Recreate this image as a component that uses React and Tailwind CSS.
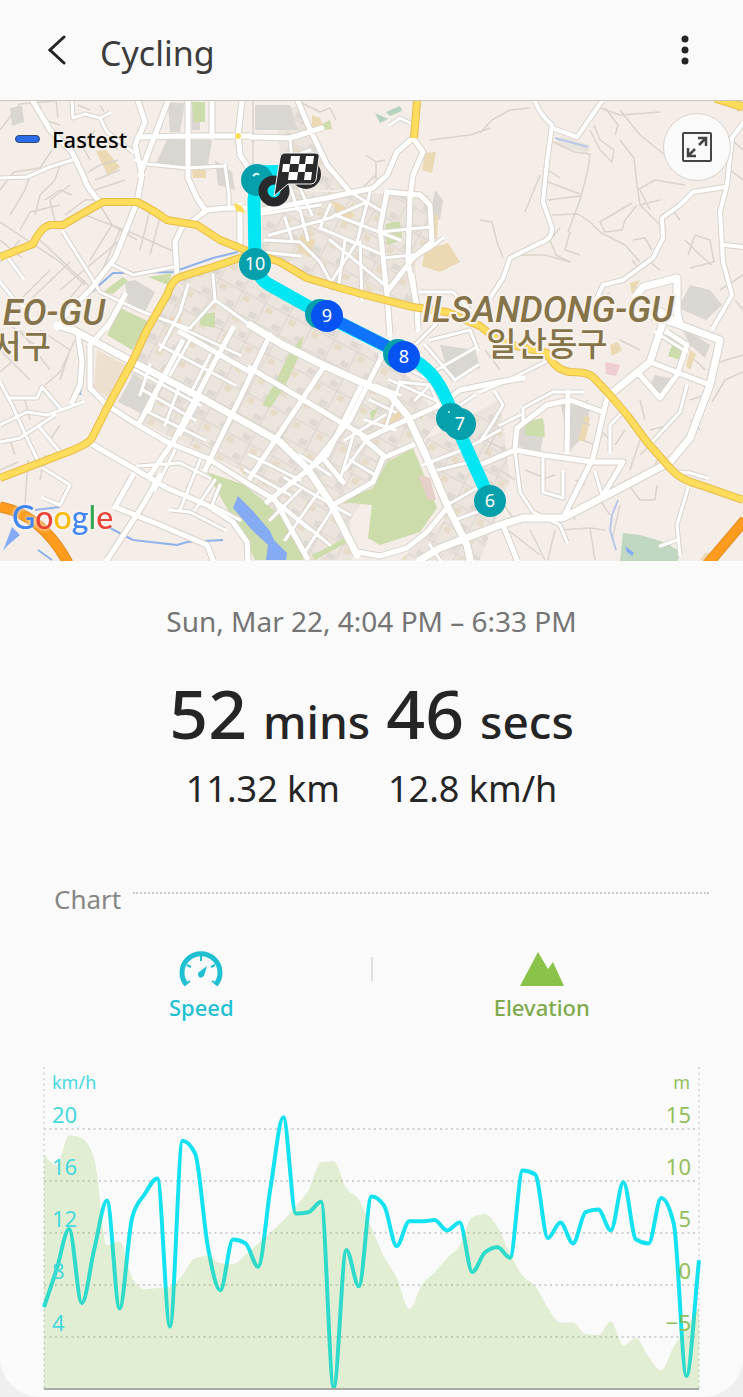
const SPEED = [
  6.3, 9.2, 12.3, 6.6, 10.8, 14.5, 6.2, 13.2, 15, 16.2, 4.8, 19.1, 18.1, 11, 7.6, 11.5, 11.2, 9.4,
  15.6, 20.9, 13.5, 13.6, 14.4, 0.1, 10.7, 7.9, 14.8, 14.1, 11, 12.9, 12.9, 13, 12.2, 12.8, 9,
  10.5, 10.9, 10.1, 16.8, 16.5, 11.6, 12.8, 11.2, 13.6, 13.8, 12.2, 15.9, 11.5, 11.2, 14.7, 12.7,
  1, 9.9,
];

const ELEVATION = [
  12.5, 11.5, 14.4, 14.1, 12.1, 3.8, 4.2, 0.7, -0.4, -0.3, -0.2, 1, 2.6, 2.8, 2.1, 2, 2.9, 4, 5.1,
  6.2, 7.6, 9.1, 11.8, 11.9, 9.3, 8.2, 5.5, 2.7, 0.7, -2.3, 0, 1.2, 2.6, 3.8, 6.5, 6.8, 5.6, 3,
  0.9, -0.1, -2.2, -3.6, -3.6, -4.7, -4.8, -3.5, -5.8, -5.1, -6.9, -8.2, -5.9, -4.2, -2.1,
];

const CHART_W = 655;
const CHART_H = 322;
const GRID = [
  { y: 62, left: "20", right: "15" },
  { y: 114, left: "16", right: "10" },
  { y: 166, left: "12", right: "5" },
  { y: 218, left: "8", right: "0" },
  { y: 270, left: "4", right: "−5" },
];

// monotone cubic, so the curve never overshoots a sample
function curve(pts) {
  const n = pts.length;
  const slope = (i) => (pts[i + 1][1] - pts[i][1]) / (pts[i + 1][0] - pts[i][0]);
  const tangents = pts.map((_, i) => {
    if (i === 0) return slope(0);
    if (i === n - 1) return slope(n - 2);
    const a = slope(i - 1);
    const b = slope(i);
    if (a * b <= 0) return 0;
    return Math.sign(a) * Math.min(Math.abs(a), Math.abs(b), Math.abs(a + b) / 4) * 2;
  });
  let d = `M${pts[0][0]} ${pts[0][1]}`;
  for (let i = 1; i < n; i++) {
    const dx = (pts[i][0] - pts[i - 1][0]) / 3;
    d += `C${pts[i - 1][0] + dx} ${pts[i - 1][1] + tangents[i - 1] * dx} ${pts[i][0] - dx} ${pts[i][1] - tangents[i] * dx} ${pts[i][0]} ${pts[i][1]}`;
  }
  return d;
}

const xAt = (i) => (i * CHART_W) / (SPEED.length - 1);
const speedPath = curve(SPEED.map((v, i) => [xAt(i), CHART_H - v * 13]));
const elevationPath =
  curve(ELEVATION.map((v, i) => [xAt(i), 62 + (15 - v) * 10.4])) + `V${CHART_H}H0Z`;

/* ---------- map data ---------- */

const LANES = [
  "M0 130L20 104L55 101M0 190L14 172L40 168L52 150M10 215L25 190L30 176M35 215L40 195L55 180L60 165M20 230L30 212L60 205M55 222L50 200L70 185M65 215L85 200L98 200M72 195L60 190L45 200M88 172L100 165L118 160M95 180L120 170M90 160L82 145L95 130M105 140L118 150M95 190L125 180M40 105L44 120L60 125M56 101L58 118M78 105L90 110M100 105L104 112",
  "M0 222L60 262L85 285M20 240L0 262M40 240L95 292M100 205L112 225L137 240M112 225L90 260M120 230L100 275M85 215L130 232L175 252M150 210L140 250M160 217L150 255M130 232L60 290M20 300L50 270M70 262L30 300M0 240L22 258M60 310L85 280",
  "M20 330L50 370M40 330L70 350L60 380M0 350L30 380M75 340L60 372L45 385M10 325L35 345M0 372L20 355M25 400L30 420M50 440L60 425M10 440L15 455M0 470L18 462M28 460L25 505M45 455L40 480",
  "M253 101V150M253 170V150M298 101L320 112L330 108L336 120M366 155L376 162L385 160M376 162V180M360 190L376 175M430 140L445 138L470 135L490 128",
  "M480 133L492 120L510 110L530 108M480 220L492 222L497 242L503 258M553 142L575 152L590 154L588 170L580 200L568 232M548 182L580 194M548 200L580 196M552 215L578 214L590 222L600 232L625 245L640 262M540 175L525 212M548 170L560 178M620 140L634 158L637 185L640 205L660 200M620 110L640 135L665 155M605 108L618 125L615 135M590 130L600 150L612 162L614 150L600 140L594 125M637 205L625 220L622 230L605 232L600 222L620 210L632 203M640 205L660 225L664 240M637 190L655 180L685 185M640 190L650 210M560 228L550 240L556 255L570 262L545 255L520 255M570 232L565 250L580 255M685 240L700 255L712 265M688 255L695 235L710 240L714 262L690 268M732 140L743 150M730 170L743 180M738 101V112M600 108L620 115L660 112",
  "M720 290L743 275M735 300L743 310M640 270L632 260M600 300L610 292M660 270L650 262M633 240L645 238L652 250M672 210L680 220",
  "M743 355L720 362L708 370M743 372L725 380L712 402M695 360L705 370M690 400L705 395M690 420L700 430M640 400L645 420M650 430L670 425M655 440L640 455M625 430L615 445M640 440L630 470M660 455L650 475L640 480M625 480L640 500L655 500L657 485M560 530L590 528L605 530M590 528L595 560M620 505L612 540M570 505L575 520M600 500L610 515M530 530L545 560M508 530L540 555M555 530L548 560",
  "M485 440L505 450M485 455L500 425M525 470L545 478M540 480L555 475M575 480L585 485M583 440L595 445M575 420L590 425M578 410L588 400M600 430L610 440M500 470L515 480M490 480L500 500L515 520M620 340L640 350M485 350L500 370",
];

const GREY_AREAS = [
  "M155 165L167 140H185V165H155Z",
  "M190 140H212L208 165H190Z",
  "M215 160L232 172L235 190L218 185Z",
  "M255 105H290L298 130H255Z",
  "M10 108L22 106L24 122L12 126Z",
  "M168 103H185L180 132H170Z",
  "M192 104H200V130H192Z",
  "M125 282L135 280L155 292L145 312L128 305Z",
  "M133 375L158 388L145 415L118 402Z",
  "M690 285L710 290L722 305L706 320L678 308Z",
  "M520 415L545 425L540 455L517 445Z",
  "M680 325L710 345L705 358L690 345Z",
  "M435 190L443 200L440 220L430 215Z",
  "M560 400L590 408L585 435L570 450Z",
  "M655 375L670 378L672 388L660 395L650 385Z",
  "M440 345L475 350L480 368L450 380Z",
];

const GREEN_AREAS = [
  "M340 502L373 488L387 462L413 448L423 472L437 508L420 532L380 545L368 538L372 505Z",
  "M120 308L150 322L132 350L107 335Z",
  "M103 292L123 277L128 281L113 294Z",
  "M148 277L172 273L168 285Z",
  "M207 472L245 485L262 500L285 520L302 545L303 560H255L240 530L225 505Z",
  "M262 405L275 383L290 352L304 335L298 358L284 388L270 408Z",
  "M192 102H205V122H194Z",
  "M322 124L330 120L332 129L322 130Z",
  "M385 225L392 222H400L402 240L387 245Z",
  "M312 555L345 538L348 542L315 560Z",
  "M370 412L378 408L372 422Z",
  "M525 422L543 418L545 437L525 435Z",
  "M672 345L684 350L680 360L668 356Z",
  "M200 315L215 312V328L200 325Z",
];

const SAND_AREAS = [
  "M96 151L106 150L120 167L108 176Z",
  "M425 250L448 243L460 262L440 272L422 266Z",
  "M425 153L436 152L432 173L422 170Z",
  "M312 115L320 118L325 130L312 128Z",
  "M300 235L315 240L310 258L298 248Z",
  "M433 215H438L437 240L432 235Z",
  "M330 200L342 205L355 215L345 225Z",
  "M192 170H206V178H193Z",
  "M170 318L180 315L182 327L170 325Z",
  "M585 415L590 418L585 442L578 440Z",
  "M630 283L640 280L632 295Z",
  "M690 350L696 354L690 370L686 366Z",
  "M383 420L402 410L400 420L385 428Z",
  "M700 560L705 553L720 551L716 561Z",
  "M610 345L618 342L622 350L612 356Z",
];

// dense residential blocks, filled with the street pattern
const BLOCKS = [
  "M175 278L245 262L320 320L400 365L440 420L420 445L395 455L350 520L352 560H300L240 470L140 422L130 365L150 325Z",
  "M262 190L430 195L434 245L415 262L418 310L340 290L262 255Z",
  "M425 440L500 400L510 480L480 560H400L445 520Z",
  "M275 112L300 105L345 190H285Z",
];

const ROADS = [
  { w: 3, d: "M0 178L27 177L50 167L72 160M72 101L73 118L85 114L100 118L110 113M100 118L107 132L133 152M113 265L133 275L173 267M523 408V422M523 408L553 392H583M655 332L676 345L687 352M495 392L503 405L493 422L480 442M688 488L677 525L680 555M660 546L677 540M677 472L690 473L707 478M390 125L400 118L410 123M8 258L23 278M285 160L310 150M225 165L229 195V208M265 240L300 242L320 262L335 290M262 252L300 256M350 192L383 212M320 228L353 242L383 255M335 215L400 240M330 240L385 285M300 210L308 240M285 218L292 240M290 187L298 210M345 240L338 290M360 242L362 300M300 188L312 215" },
  { w: 3, d: "M160 345L235 385M175 325L240 355M150 365L140 395M165 372L150 410M190 340L170 375M210 355L190 395M180 385L165 425M200 398L180 435M148 412L205 440M143 390L195 420M135 370L200 405M138 466L180 463L210 478M150 480L195 500M175 450L155 490M200 460L180 510M170 510L190 512L225 530M215 480L195 510M220 485L212 505L240 520" },
  { w: 3, d: "M285 478L350 515M275 500L330 545M260 490L310 530M300 490L270 520M320 490L285 540M335 505L305 552M250 455L300 480M245 470L290 495M300 455L330 475M350 460L375 475M345 440L385 415M355 430L340 480M380 355L440 385M390 380L435 400M375 385L400 395M370 400L395 412M365 420L395 430M400 382L385 430M415 430L428 455M430 385L415 400" },
  { w: 3, d: "M135 160L147 164L187 168L225 166M63 232L90 275L100 292L143 312L187 328M0 282L13 298L30 312M0 382L12 405L27 438L40 465M0 425L27 412L47 415L83 402M10 398H37L42 387L60 408M0 442L20 438L55 415M40 428L60 452M43 468L70 485L60 505L43 498M687 385L680 412L652 442M515 450L520 492L533 512L560 525L567 542M543 458V492L563 498V472M595 472L602 495M623 412L610 425V452M480 392L513 378L553 358M290 138L292 162L302 175M188 285L180 312L160 350M213 275L215 300L190 328M215 300L250 325M270 235L330 218L367 202M262 214L320 205M320 228L330 205M370 192L357 242L327 288M383 258L413 255M380 232L430 227M418 308L413 275M420 292H453L470 310M443 238L430 248L413 258M400 382L430 385L440 408M382 432L368 438L345 470M447 505L477 488M423 465L467 448L500 430M460 405L475 395" },
  { w: 4, d: "M535 101Q540 115 552 125L547 162L543 202L552 228Q552 240 540 243L510 258L503 278L490 298M552 128L577 137L602 101M597 298L603 285L623 280L653 258L663 238L662 218L680 205L693 192L725 187M743 123L732 138L727 185L720 212L723 262L732 295L713 328M725 245L743 247" },
  { w: 3, d: "M430 340L470 330L478 350M415 345L440 320M425 345L455 380M433 372L475 348M455 380L478 365M500 425L520 415M480 465L500 455M438 470L470 462M455 520L495 505M430 545L440 560" },
  { w: 5, d: "M33 101L50 130L72 152L83 175Q88 192 103 204M168 101L150 148L140 175M188 101V178L197 198L205 210M212 101V137M242 101L238 135L240 155L248 167M240 205V250M250 137L290 138L322 128M298 101L308 125L327 165L350 192M387 192L420 195L430 205L432 242L413 258L387 292M410 198L408 262L417 308L418 330M115 507L160 525L207 545L213 560M108 325L90 345M125 295L107 328M180 332L250 372M480 465L515 450L543 455L593 462H623L603 495M568 392L567 452M640 375L660 398L677 375L687 345L667 332M650 362L710 385M323 458L343 482M333 505L373 482L383 458L413 445M363 438L383 455M368 438L380 432L440 405L460 390L500 382L523 378M115 507L133 475" },
  { w: 5, d: "M142 175L137 202L115 258L90 290L68 312L57 328M138 101L145 122L135 145L142 175M138 137L188 136L250 136M190 223L207 210L227 208H245M182 227L175 242L177 275M78 335L82 362L80 385L72 402M90 345V388L107 405L133 422L167 442L207 458L250 485L275 500L307 558M90 443L107 453L133 468L167 488L207 505L233 522L247 542L248 560M160 475L143 505L130 525L107 560M182 342L140 422M233 328L213 365L173 442L150 475M262 210L327 198L373 188L387 175L397 152L413 138L423 152L413 175L410 198M387 192L380 228L387 295L390 335M515 448L517 428L547 405L570 400L603 412M607 398L593 458L563 518M357 552L380 556L407 548L427 532L447 508M250 368L307 402L367 438M270 335L240 398L205 470M323 368L250 478M360 388L327 455L267 502M390 340L350 420L307 472M503 525L517 560" },
  { w: 7, d: "M57 325L73 330L133 362L200 397L250 425L280 442L307 468L330 502L357 555M250 325L283 345L323 365L390 395L407 415L427 458L447 505L467 545L470 560M420 560L440 548L500 525L523 518L563 518L613 492L670 462L690 438L710 385L720 340L680 325L650 305M662 325L650 362L613 392M677 312L680 325L640 312M677 312V278L643 287L636 296" },
];

const YELLOW_ROADS = [
  { w: 8, d: "M0 257L33 244Q42 225 52 225H63L80 215L103 202L137 202Q150 208 167 220L197 225L220 240L250 252L280 262L307 278L340 288L373 297L413 307L447 312L480 326L500 342L547 353Q555 370 570 372Q588 372 593 377L610 395L627 415L647 442L670 468Q680 480 700 485L743 500" },
  { w: 8, d: "M243 257L213 267L180 277Q172 280 167 295L147 330L132 362L107 408L92 438Q88 445 60 455L0 478" },
  { w: 8, d: "M417 101L414 138" },
  { w: 9, d: "M715 98L743 107" },
];

const TRACK = "M300 171L257 172L254 200L255 262Q258 278 268 284L318 312L400 353Q430 365 443 392Q450 405 456 425L490 500";

const MARKERS = [
  { x: 320, y: 314, r: 15, fill: "#06a0ad" },
  { x: 398, y: 354, r: 15, fill: "#06a0ad" },
  { x: 451, y: 418, r: 15, fill: "#06a0ad" },
  { x: 257, y: 180, r: 16, fill: "#06a0ad" },
  { x: 255, y: 264, r: 16, fill: "#06a0ad", label: "10" },
  { x: 327, y: 316, r: 16, fill: "#0753f2", label: "9" },
  { x: 404, y: 357, r: 16, fill: "#0753f2", label: "8" },
  { x: 460, y: 424, r: 16, fill: "#06a0ad", label: "7" },
  { x: 490, y: 501, r: 16, fill: "#06a0ad", label: "6" },
];

function MapCanvas() {
  return (
    <svg
      viewBox="0 101 743 460"
      preserveAspectRatio="xMidYMid slice"
      className="block h-auto w-full"
      role="img"
      aria-label="Route map"
    >
      <defs>
        <pattern id="streets" width="26" height="22" patternUnits="userSpaceOnUse" patternTransform="rotate(28)">
          <rect width="26" height="22" fill="#ebe5de" />
          <path d="M0 11H26M13 0V22" stroke="#d9d3cb" strokeWidth="1" />
          <rect x="3" y="3" width="8" height="6" fill="#dfd9d3" />
          <rect x="16" y="13" width="7" height="6" fill="#e6dcc8" />
        </pattern>
      </defs>
      <rect y="101" width="743" height="460" fill="#f5ede7" />
      {BLOCKS.map((d) => <path key={d} d={d} fill="url(#streets)" />)}
      {GREY_AREAS.map((d) => <path key={d} d={d} fill="#dad6d1" />)}
      <path d="M97 350L128 366L108 398L94 388Z" fill="#eee0cf" />
      {SAND_AREAS.map((d) => <path key={d} d={d} fill="#ead9b2" />)}
      {GREEN_AREAS.map((d) => <path key={d} d={d} fill="#cddcab" />)}
      <path d="M562 136L590 145L588 153L556 144Z" fill="#e8e4dc" />
      <path d="M375 113L388 119L380 123ZM386 112L400 106L402 111L390 116Z" fill="#b5d3bf" />
      <path d="M623 533L640 535L667 543L680 552L678 561H620Z" fill="#c0d8c2" />
      <path d="M605 362L620 365L616 376L606 374Z" fill="#f0cdd2" />
      <path d="M418 475L430 478L436 500L428 500Z" fill="#e6cfc9" />
      <g fill="none" stroke="#dad4cd" strokeWidth="1.5" strokeLinejoin="round">
        {LANES.map((d) => <path key={d} d={d} />)}
      </g>
      <path d="M233 508L238 496L253 511L270 531L274 540L287 553L286 560H266L268 545L252 530Z" fill="#84abf3" />
      <path d="M3 551L12 527L20 535L8 545Z" fill="#84abf3" />
      <path d="M625 546L634 553L632 556L627 552Z" fill="#84abf3" />
      <path
        d="M87 296L113 273L127 273L173 272L213 258L238 252M110 528L133 540L177 545L187 542L223 540M35 510L60 507M78 335L84 360L80 395M38 550L52 560"
        fill="none" stroke="#8fb2ea" strokeWidth="2" strokeLinejoin="round"
      />
      <path d="M555 138L588 147M618 500L612 515L610 530L616 550" fill="none" stroke="#b9c8e6" strokeWidth="2" />
      <g fill="none" stroke="#d9d3cc" strokeLinejoin="round">
        {ROADS.map((r) => <path key={r.d} d={r.d} strokeWidth={r.w + 2} />)}
      </g>
      <g fill="none" stroke="#ffffff" strokeLinejoin="round" strokeLinecap="round">
        {ROADS.map((r) => <path key={r.d} d={r.d} strokeWidth={r.w} />)}
      </g>
      <g fill="none" strokeLinejoin="round">
        {YELLOW_ROADS.map((r) => <path key={r.d} d={r.d} stroke="#e6bd48" strokeWidth={r.w} />)}
        {YELLOW_ROADS.map((r) => <path key={r.d} d={r.d} stroke="#fedc5c" strokeWidth={r.w - 2} />)}
        <path d="M0 507Q42 515 68 563M745 520L706 566" stroke="#e08b1c" strokeWidth="11" />
        <path d="M0 507Q42 515 68 563M745 520L706 566" stroke="#ff9c1e" strokeWidth="9" />
      </g>
      <circle cx="238" cy="136" r="3" fill="#fedc5c" />
      <path d="M234 203L242 206L245 213L236 211Z" fill="#fedc5c" />

      {/* district names */}
      <g
        fill="#857449" stroke="#f8f1ea" strokeWidth="4" paintOrder="stroke" strokeLinejoin="round"
        fontFamily="Roboto, 'Noto Sans CJK KR', sans-serif" fontWeight="500"
      >
        <text x="105" y="325" textAnchor="end" fontSize="36" fontStyle="italic">EO-GU</text>
        <text x="548" y="322" textAnchor="middle" fontSize="36" fontStyle="italic">ILSANDONG-GU</text>
        <text x="51" y="358" textAnchor="end" fontSize="32">서구</text>
        <text x="547" y="356" textAnchor="middle" fontSize="33">일산동구</text>
      </g>

      {/* track */}
      <path d={TRACK} fill="none" stroke="#02e6f3" strokeWidth="13" strokeLinejoin="round" />
      <path d="M327 316L404 355" stroke="#0f74fb" strokeWidth="12" />
      {MARKERS.map((m) => (
        <g key={`${m.x}-${m.y}`}>
          <circle cx={m.x} cy={m.y} r={m.r} fill={m.fill} />
          {m.label && (
            <text
              x={m.x} y={m.y + 6} textAnchor="middle" fontSize="18" fill="#fff"
              fontFamily="'Noto Sans', sans-serif"
            >
              {m.label}
            </text>
          )}
        </g>
      ))}
      <path d="M253 176Q257 172 259 175" stroke="#d8f4f5" strokeWidth="2" fill="none" />
      <circle cx="449" cy="412" r="1" fill="#d8f4f5" />

      {/* start and finish pins */}
      <circle cx="306" cy="174" r="15" fill="#2a2a2c" />
      <circle cx="274" cy="191" r="11" fill="#02e6f3" stroke="#2a2a2c" strokeWidth="9" />
      <path
        d="M285 153H315Q320 153 319 158L316 180Q315 184 311 184H288L274 196L280 158Q281 153 285 153Z"
        fill="#2a2a2c" stroke="#f4f4f4" strokeWidth="1"
      />
      <path d="M291 156h9l-1 8h-9zM306 156h8l-1 8h-8zM283 164h7l-1 8h-7zM299 164h7l-1 8h-7zM289 172h9l-1 8h-9zM305 172h7l-1 8h-7z" fill="#fff" />
    </svg>
  );
}

function ExpandIcon() {
  return (
    <svg viewBox="0 0 30 30" className="size-[30px]" fill="none" stroke="#454545" strokeWidth="2" aria-hidden="true">
      <rect x="1" y="1" width="28" height="28" rx="1" />
      <path d="M17 13L24 6M16 6H24V14M13 17L6 24M6 16V24H14" strokeWidth="2.5" />
    </svg>
  );
}

function SpeedIcon() {
  return (
    <svg viewBox="0 0 44 36" className="h-9 w-11" fill="none" stroke="#20c0d2" aria-hidden="true">
      <path d="M7.500 34A19 19 0 1 1 36.500 34" strokeWidth="5" />
      <path d="M22 4V10M8 14L12 16M36 14L32 16M6 33L11 30M38 33L33 30" strokeWidth="2" />
      <path d="M28 15L25 25Q22 28 20 26Q18 23 20 21Z" fill="#20c0d2" stroke="none" />
    </svg>
  );
}

function ElevationIcon() {
  return (
    <svg viewBox="0 0 44 36" className="h-9 w-11" fill="#8bc34a" aria-hidden="true">
      <path d="M0 35L18 1L28 18L33 11L44 35Z" />
    </svg>
  );
}

function ActivityChart() {
  return (
    <svg
      viewBox={`0 0 ${CHART_W} ${CHART_H + 2}`}
      className="block w-full overflow-visible font-['Noto_Sans',sans-serif]"
      role="img"
      aria-label="Speed and elevation chart"
    >
      <g stroke="#cfcfcf" strokeWidth="2" strokeDasharray="2 3.500">
        {GRID.map((g) => <path key={g.y} d={`M0 ${g.y}H${CHART_W}`} />)}
        <path d={`M0 0V${CHART_H}M${CHART_W} 0V${CHART_H}`} stroke="#dedede" />
      </g>
      <path d={speedPath} fill="none" stroke="#14e2f0" strokeWidth="4" strokeLinejoin="round" />
      <path d={elevationPath} fill="#8bc34a" fillOpacity="0.22" />
      <path d={`M0 ${CHART_H}H${CHART_W}`} stroke="#a8aaa6" strokeWidth="2" />
      <g fill="#45d8dc">
        <text x="8" y="22" fontSize="18">km/h</text>
        {GRID.map((g) => <text key={g.y} x="8" y={g.y - 6} fontSize="22">{g.left}</text>)}
      </g>
      <g fill="#93bf5c" textAnchor="end">
        <text x="646" y="22" fontSize="18">m</text>
        {GRID.map((g) => <text key={g.y} x="647" y={g.y - 6} fontSize="22">{g.right}</text>)}
      </g>
    </svg>
  );
}

export default function App() {
  return (
    <div className="bg-[#efefef] font-['Noto_Sans',sans-serif]">
      <div className="rounded-b-[40px] bg-[#fafafa] pb-1.5">
        <header className="flex h-[101px] items-center border-b border-[#c9c6c2] px-12">
          <button type="button" aria-label="Back" className="flex h-12 w-5 items-center">
            <svg viewBox="0 0 18 30" className="h-[30px] w-[18px]" fill="none" stroke="#252525" strokeWidth="3" strokeLinecap="round">
              <path d="M16 2L2 15L16 28" />
            </svg>
          </button>
          <h1 className="ml-8 pt-1.5 text-[34px] leading-10 text-[#3c3c3c]">Cycling</h1>
          <button type="button" aria-label="More options" className="ml-auto flex h-12 w-5 items-center justify-center">
            <svg viewBox="0 0 8 30" className="h-[30px] w-2" fill="#252525">
              <circle cx="4" cy="4" r="3.500" />
              <circle cx="4" cy="15" r="3.500" />
              <circle cx="4" cy="26" r="3.500" />
            </svg>
          </button>
        </header>

        <section className="relative overflow-hidden">
          <MapCanvas />
          <div className="absolute top-5 left-[15px] flex items-center gap-3">
            <span className="h-2 w-[25px] rounded-full border border-[#33466e] bg-[#2a6cea]" />
            <span className="text-[22px] leading-9 font-medium text-black">Fastest</span>
          </div>
          <button
            type="button"
            aria-label="Expand map"
            className="absolute top-3 right-3 flex size-[68px] items-center justify-center rounded-full border border-[#d8d4d0] bg-[#fafafa]"
          >
            <ExpandIcon />
          </button>
          <div
            className="absolute bottom-6 left-3 flex font-['Lato',sans-serif] text-[32px] leading-10 font-medium drop-shadow-[0_0_2px_#ffffff]"
            aria-label="Google"
          >
            <span className="text-[#4285f4]">G</span>
            <span className="text-[#ea4335]">o</span>
            <span className="text-[#fbbc05]">o</span>
            <span className="text-[#4285f4]">g</span>
            <span className="text-[#34a853]">l</span>
            <span className="text-[#ea4335]">e</span>
          </div>
        </section>

        <main>
          <section className="flex flex-col items-center pt-10">
            <p className="text-[28px] leading-10 text-[#757575]">Sun, Mar 22, 4:04 PM – 6:33 PM</p>
            <p className="mt-8 flex items-baseline gap-4 leading-20 font-medium text-[#252525]">
              <span className="text-[68px]">52</span>
              <span className="text-[46px]">mins</span>
              <span className="text-[68px]">46</span>
              <span className="text-[46px]">secs</span>
            </p>
            <p className="mt-2 flex gap-12 text-4xl leading-10 text-[#252525]">
              <span>11.32 km</span>
              <span>12.8 km/h</span>
            </p>
          </section>

          <section className="pt-[70px]">
            <div className="flex items-center gap-3 pr-[34px] pl-[54px]">
              <h2 className="text-[26px] leading-10 text-[#868686]">Chart</h2>
              <div className="mb-3 h-0 flex-1 border-t-2 border-dotted border-[#cccccc]" />
            </div>

            <div className="mt-8 flex items-start px-8">
              <button type="button" className="flex flex-1 flex-col items-center gap-1 text-[22px] leading-8 font-medium text-[#20c0d2]">
                <SpeedIcon />
                Speed
              </button>
              <span className="mt-1.5 h-6 w-0.5 bg-[#dedede]" />
              <button type="button" className="flex flex-1 flex-col items-center gap-1 text-[22px] leading-8 font-medium text-[#7faa4b]">
                <ElevationIcon />
                Elevation
              </button>
            </div>

            <div className="mt-11 px-11">
              <ActivityChart />
            </div>
          </section>
        </main>
      </div>
    </div>
  );
}
